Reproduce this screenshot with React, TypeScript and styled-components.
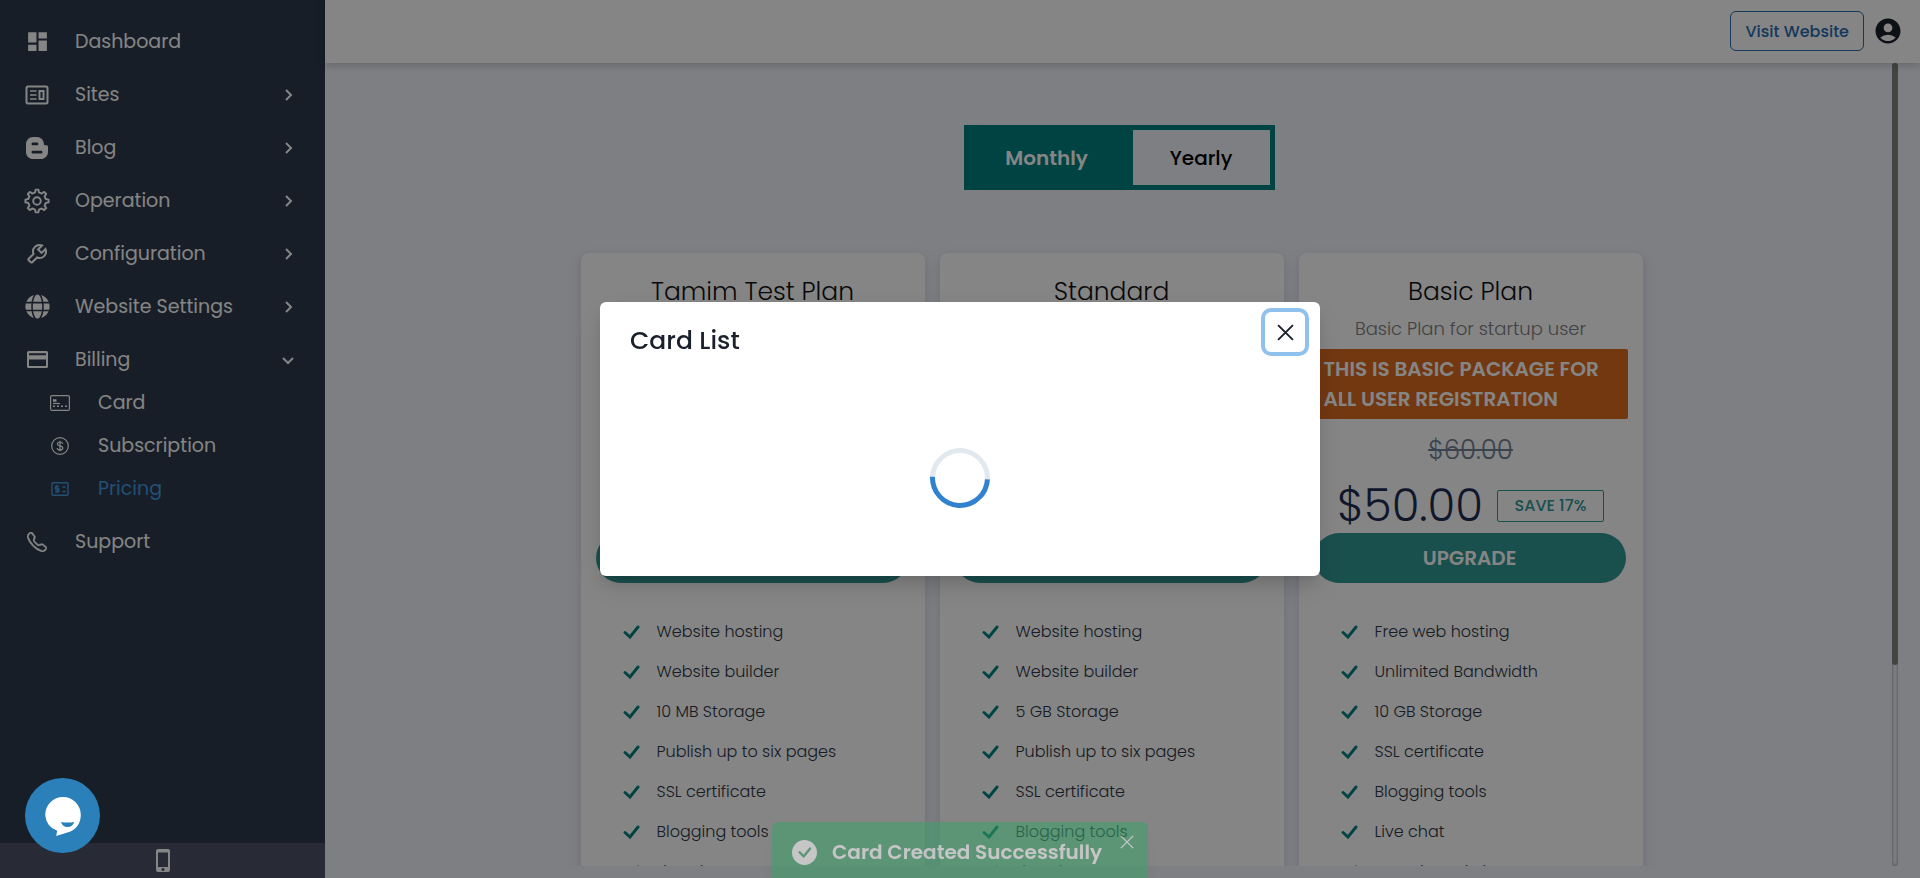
import React from "react";
import styled, { createGlobalStyle, css } from "styled-components";
import { MdDashboard, MdAccountCircle } from "react-icons/md";
import { BsTelephone, BsCheckCircleFill } from "react-icons/bs";
import { BiChevronRight, BiChevronDown, BiWrench } from "react-icons/bi";
import { FaGlobe } from "react-icons/fa";
import { ImBlogger } from "react-icons/im";

const Global = createGlobalStyle`
  *, *::before, *::after { box-sizing: border-box; }
  body {
    margin: 0;
    font-family: Poppins, Inter, sans-serif;
    color: #2d3748;
    background: #f1f3fa;
    overflow: hidden;
  }
  button { font: inherit; cursor: pointer; }
  h1, h2, h3, p, ul { margin: 0; padding: 0; font-weight: 400; }
  ul { list-style: none; }
  a { color: inherit; text-decoration: none; }
`;

const Shell = styled.div`
  display: flex;
  height: 100vh;
`;

const Sidebar = styled.aside`
  flex: 0 0 325px;
  display: flex;
  flex-direction: column;
  background: #2d3a4b;
  color: #fff;
`;

const Nav = styled.nav`
  flex: 1;
  padding-top: 10px;
`;

const NavLink = styled.a<{ $sub?: boolean; $active?: boolean }>`
  display: grid;
  align-items: center;
  grid-template-columns: 26px 1fr 24px;
  column-gap: 25px;
  height: 43px;
  margin-top: 10px;
  padding: 0 25px 0 24px;
  font-size: 19px;
  svg:first-child { justify-self: center; }
  ${(p) =>
    p.$sub &&
    css`
      margin-top: 0;
      padding-left: 47px;
    `}
  ${(p) => p.$active && css`color: #4299e1;`}
`;

const SideFoot = styled.button`
  display: flex;
  align-items: center;
  justify-content: center;
  height: 35px;
  padding: 0;
  border: 0;
  background: #4d5268;
  color: #fff;
`;

const Page = styled.div`
  flex: 1;
  min-width: 0;
  display: flex;
  flex-direction: column;
`;

const TopBar = styled.header`
  position: relative;
  display: flex;
  align-items: center;
  justify-content: flex-end;
  gap: 9px;
  height: 63px;
  padding: 0 17px 1px 0;
  background: #fff;
  color: #1a202c;
  box-shadow: 0 2px 8px rgba(0, 0, 0, 0.2);
`;

const VisitLink = styled.a`
  display: flex;
  align-items: center;
  height: 40px;
  padding: 0 14px;
  border: 1px solid #2b6cb0;
  border-radius: 6px;
  color: #2b6cb0;
  font-size: 16px;
  font-weight: 500;
`;

const IconButton = styled.button`
  display: flex;
  padding: 0;
  border: 0;
  background: none;
  color: inherit;
`;

const Body = styled.div`
  flex: 1;
  min-height: 0;
  display: flex;
  padding: 0 22px 12px 0;
`;

const Scroller = styled.main`
  flex: 1;
  overflow: hidden;
  padding: 62px 0 0 6px;
`;

const Track = styled.div`
  width: 6px;
  border-radius: 3px;
  box-shadow: inset 0 0 3px rgba(0, 0, 0, 0.5);
`;

const Thumb = styled.div`
  height: 75%;
  border-radius: 3px;
  background: #828282;
`;

const ToggleRow = styled.div`
  display: flex;
  justify-content: center;
  padding: 0 0 63px 15px;
`;

const Toggle = styled.div`
  display: flex;
  width: 311px;
  height: 65px;
  border: 5px solid #008080;
`;

const ToggleButton = styled.button<{ $on?: boolean }>`
  flex: ${(p) => (p.$on ? "0 0 164px" : "1")};
  padding: ${(p) => (p.$on ? "0 8px 0 0" : "0")};
  border: 0;
  background: ${(p) => (p.$on ? "#008080" : "transparent")};
  color: ${(p) => (p.$on ? "#fff" : "#000")};
  font-size: 20px;
  font-weight: ${(p) => (p.$on ? 600 : 500)};
`;

const Plans = styled.div`
  display: flex;
  justify-content: center;
  gap: 15px;
`;

const Card = styled.section`
  width: 344px;
  padding: 0 15px 30px;
  border-radius: 8px;
  background: #fff;
  box-shadow: 0 4px 12px rgba(0, 40, 100, 0.15);
`;

const CardHead = styled.div`
  display: flex;
  flex-direction: column;
  align-items: center;
  height: 330px;
  padding-top: 21px;
`;

const PlanName = styled.h2`
  color: #111;
  font-size: 25px;
  font-weight: 300;
  line-height: 36px;
`;

const PlanNote = styled.p`
  margin-top: 6px;
  color: #808080;
  font-size: 18px;
  font-weight: 300;
  line-height: 26px;
`;

const Banner = styled.p`
  align-self: stretch;
  margin-top: 7px;
  padding: 5px 10px;
  border-radius: 2px;
  background: #dd6b20;
  color: #fff;
  font-size: 20px;
  font-weight: 600;
  line-height: 30px;
`;

const OldPrice = styled.del`
  margin-top: 13px;
  color: #718096;
  font-size: 26px;
  font-weight: 300;
  line-height: 36px;
`;

const PriceRow = styled.div`
  display: flex;
  align-items: center;
  gap: 14px;
  margin-top: 11px;
`;

const Price = styled.span`
  color: #1d2c51;
  font-size: 45px;
  font-weight: 300;
  line-height: 54px;
`;

const Save = styled.span`
  width: 107px;
  border: 1px solid #319795;
  border-radius: 2px;
  color: #319795;
  font-size: 16px;
  font-weight: 500;
  line-height: 30px;
  text-align: center;
`;

const Upgrade = styled.button`
  align-self: stretch;
  margin: auto 2px 0 0;
  padding: 0;
  border: 0;
  border-radius: 25px;
  background: #319795;
  color: #fff;
  font-size: 20px;
  font-weight: 600;
  line-height: 50px;
`;

const Features = styled.ul`
  padding: 29px 0 0 27px;
  font-size: 16px;
  font-weight: 300;
  line-height: 40px;
`;

const Feature = styled.li`
  display: flex;
  align-items: center;
  gap: 17px;
  svg { color: #008080; }
`;

const Overlay = styled.div`
  position: fixed;
  inset: 0;
  display: flex;
  justify-content: center;
  align-items: center;
  background: rgba(0, 0, 0, 0.48);
`;

const Dialog = styled.div`
  position: relative;
  width: 720px;
  height: 274px;
  padding: 21px 30px;
  border-radius: 6px;
  background: #fff;
  box-shadow: 0 10px 15px -3px rgba(0, 0, 0, 0.1), 0 4px 6px -2px rgba(0, 0, 0, 0.05), 0 12px 30px rgba(0, 0, 0, 0.1);
`;

const DialogTitle = styled.h1`
  color: #1a202c;
  font-size: 25px;
  font-weight: 500;
  line-height: 36px;
`;

const CloseButton = styled.button`
  position: absolute;
  top: 10px;
  right: 15px;
  display: grid;
  place-items: center;
  width: 40px;
  height: 40px;
  padding: 0;
  border: 0;
  border-radius: 6px;
  background: #fff;
  box-shadow: 0 0 0 4px rgba(66, 153, 225, 0.6);
  color: #1a202c;
`;

const SpinnerWrap = styled.div`
  display: flex;
  justify-content: center;
  padding-top: 89px;
`;

const Spinner = styled.div`
  width: 60px;
  height: 60px;
  border: 5px solid #e2e8f0;
  border-right-color: #3182ce;
  border-bottom-color: #3182ce;
  border-radius: 50%;
  transform: rotate(48deg);
`;

const Toast = styled.div`
  position: fixed;
  top: calc(100% - 56px);
  left: 50%;
  display: flex;
  align-items: center;
  width: 376px;
  height: 60px;
  margin-left: -188px;
  padding: 0 14px 0 20px;
  gap: 15px;
  border-radius: 6px;
  background: #38a169;
  color: #fff;
  font-size: 20px;
  font-weight: 600;
  opacity: 0.53;
  white-space: nowrap;
  box-shadow: 0 10px 15px -3px rgba(0, 0, 0, 0.1);
`;

const ToastClose = styled(IconButton)`
  position: absolute;
  top: 13px;
  right: 14px;
`;

const Chat = styled.button`
  position: fixed;
  left: 25px;
  bottom: 25px;
  width: 75px;
  height: 75px;
  padding: 0;
  border: 0;
  border-radius: 50%;
  background: #2b80b9;
`;

const SitesIcon = () => (
  <svg width="24" height="24" viewBox="0 0 24 24" fill="none" stroke="currentColor" strokeWidth="2">
    <rect x="1.5" y="3.5" width="21" height="17" rx="1.5" />
    <path d="M5 8h6.500M5 12h6.500M5 16h6.500" strokeWidth="1.700" />
    <rect x="14.500" y="8" width="4" height="8" />
  </svg>
);

const GearIcon = () => (
  <svg width="26" height="26" viewBox="0 0 24 24" fill="none" stroke="currentColor" strokeWidth="1.800" strokeLinejoin="round">
    <circle cx="12" cy="12" r="3.500" />
    <path d="M10.200 4l.5-2.500h2.600l.5 2.500 2.600 1.100 2.200-1.500 1.900 1.900-1.500 2.200 1.100 2.500 2.600.5v2.600l-2.600.5-1.100 2.500 1.500 2.200-1.900 1.900-2.200-1.500-2.600 1.100-.5 2.500h-2.600l-.5-2.500-2.600-1.100-2.200 1.500-1.900-1.900 1.500-2.200L3.900 13.800l-2.600-.5v-2.600l2.600-.5L5 7.700 3.500 5.500l1.900-1.900 2.200 1.500z" />
  </svg>
);

const CardIcon = () => (
  <svg width="21" height="17" viewBox="0 0 21 17" fill="currentColor">
    <path fillRule="evenodd" d="M1.500 0h18A1.500 1.500 0 0 1 21 1.500v14a1.500 1.500 0 0 1-1.500 1.500h-18A1.500 1.500 0 0 1 0 15.500v-14A1.500 1.500 0 0 1 1.500 0zM2 2.200v2h17v-2zM2 8.500V15h17V8.500z" />
  </svg>
);

const SubCardIcon = () => (
  <svg width="20" height="16" viewBox="0 0 20 16" fill="none" stroke="currentColor">
    <rect x=".6" y=".6" width="18.800" height="14.800" rx="1.500" strokeWidth="1.200" />
    <path d="M3 5.500h3.500" strokeWidth="2.500" />
    <path d="M3 8.500h7" strokeWidth="1.200" />
    <path d="M3 11.200h14" strokeWidth="1.400" strokeDasharray="2 2" />
  </svg>
);

const DollarIcon = () => (
  <svg width="18" height="18" viewBox="0 0 18 18" fill="none" stroke="currentColor" strokeWidth="1.200">
    <circle cx="9" cy="9" r="8.300" />
    <path d="M11.700 6.800C11.500 5.600 10.500 5 9 5S6.400 5.700 6.400 6.900C6.400 9.500 11.800 8.200 11.800 11c0 1.200-1.200 2-2.800 2s-2.700-.8-2.800-2M9 3.700v10.600" />
  </svg>
);

const PricingIcon = () => (
  <svg width="18" height="14" viewBox="0 0 18 14" fill="none" stroke="currentColor" strokeWidth="1.400">
    <rect x="1" y=".7" width="16" height="12.600" rx="1" />
    <path d="M8 4.500H4.500V7H7.800v2.500H4M6.100 3v8" />
    <path d="M11.500 5h3M11.500 9.500h3" />
  </svg>
);

const PhoneDevice = () => (
  <svg width="14" height="23" viewBox="0 0 14 23" fill="currentColor">
    <path fillRule="evenodd" d="M2 0h10a2 2 0 0 1 2 2v19a2 2 0 0 1-2 2H2a2 2 0 0 1-2-2V2a2 2 0 0 1 2-2zM2 3.500v14.500h10V3.500zM7 19a1.500 1.500 0 1 0 0 3 1.500 1.500 0 0 0 0-3z" />
  </svg>
);

const Cross = ({ size, weight }: { size: number; weight: number }) => (
  <svg width={size} height={size} viewBox="0 0 16 16" stroke="currentColor" strokeWidth={weight}>
    <path d="M1 1l14 14M15 1L1 15" />
  </svg>
);

const Tick = () => (
  <svg width="17" height="14" viewBox="0 0 17 14" fill="none" stroke="currentColor" strokeWidth="2.900" strokeLinecap="round">
    <path d="M2 7.500l5 4.500L15 2" />
  </svg>
);

const ChatGlyph = () => (
  <svg width="75" height="75" viewBox="0 0 75 75">
    <path fill="#fff" d="M38 19a17.800 17.800 0 0 1 17.800 17.800c0 9-5 14.500-11 17L31.200 58l1-5.200A17.500 17.500 0 0 1 20.200 36.800 17.800 17.800 0 0 1 38 19z" />
    <path fill="#2b80b9" d="M36 44q6.500 1 13.200 0-1.500 5-6.600 5T36 44z" />
  </svg>
);

type Item = { label: string; icon: React.ReactNode; more?: "right" | "down"; sub?: boolean; active?: boolean };

const items: Item[] = [
  { label: "Dashboard", icon: <MdDashboard size={25} /> },
  { label: "Sites", icon: <SitesIcon />, more: "right" },
  { label: "Blog", icon: <ImBlogger size={22} />, more: "right" },
  { label: "Operation", icon: <GearIcon />, more: "right" },
  { label: "Configuration", icon: <BiWrench size={24} />, more: "right" },
  { label: "Website Settings", icon: <FaGlobe size={25} />, more: "right" },
  { label: "Billing", icon: <CardIcon />, more: "down" },
  { label: "Card", icon: <SubCardIcon />, sub: true },
  { label: "Subscription", icon: <DollarIcon />, sub: true },
  { label: "Pricing", icon: <PricingIcon />, sub: true, active: true },
  { label: "Support", icon: <BsTelephone size={20} strokeWidth={0.5} /> },
];

type Plan = { name: string; note?: string; banner?: string; old?: string; price?: string; save?: string; features: string[] };

const plans: Plan[] = [
  {
    name: "Tamim Test Plan",
    features: ["Website hosting", "Website builder", "10 MB Storage", "Publish up to six pages", "SSL certificate", "Blogging tools", "Live chat"],
  },
  {
    name: "Standard",
    features: ["Website hosting", "Website builder", "5 GB Storage", "Publish up to six pages", "SSL certificate", "Blogging tools", "Live chat"],
  },
  {
    name: "Basic Plan",
    note: "Basic Plan for startup user",
    banner: "THIS IS BASIC PACKAGE FOR ALL USER REGISTRATION",
    old: "$60.00",
    price: "$50.00",
    save: "SAVE 17%",
    features: ["Free web hosting", "Unlimited Bandwidth", "10 GB Storage", "SSL certificate", "Blogging tools", "Live chat", "Search statistics"],
  },
];

export default function App() {
  return (
    <>
      <Global />
      <Shell>
        <Sidebar>
          <Nav>
            {items.map((it) => (
              <NavLink key={it.label} href="#" $sub={it.sub} $active={it.active}>
                {it.icon}
                <span>{it.label}</span>
                {it.more === "right" && <BiChevronRight size={24} />}
                {it.more === "down" && <BiChevronDown size={24} />}
              </NavLink>
            ))}
          </Nav>
          <SideFoot aria-label="Mobile view">
            <PhoneDevice />
          </SideFoot>
        </Sidebar>
        <Page>
          <TopBar>
            <VisitLink href="#">Visit Website</VisitLink>
            <IconButton aria-label="Account">
              <MdAccountCircle size={30} />
            </IconButton>
          </TopBar>
          <Body>
            <Scroller>
              <ToggleRow>
                <Toggle>
                  <ToggleButton $on>Monthly</ToggleButton>
                  <ToggleButton>Yearly</ToggleButton>
                </Toggle>
              </ToggleRow>
              <Plans>
                {plans.map((p) => (
                  <Card key={p.name}>
                    <CardHead>
                      <PlanName>{p.name}</PlanName>
                      {p.note && <PlanNote>{p.note}</PlanNote>}
                      {p.banner && <Banner>{p.banner}</Banner>}
                      {p.old && <OldPrice>{p.old}</OldPrice>}
                      {p.price && (
                        <PriceRow>
                          <Price>{p.price}</Price>
                          <Save>{p.save}</Save>
                        </PriceRow>
                      )}
                      <Upgrade>UPGRADE</Upgrade>
                    </CardHead>
                    <Features>
                      {p.features.map((f) => (
                        <Feature key={f}>
                          <Tick />
                          {f}
                        </Feature>
                      ))}
                    </Features>
                  </Card>
                ))}
              </Plans>
            </Scroller>
            <Track>
              <Thumb />
            </Track>
          </Body>
        </Page>
      </Shell>
      <Overlay>
        <Dialog role="dialog" aria-modal="true" aria-labelledby="card-list-title">
          <DialogTitle id="card-list-title">Card List</DialogTitle>
          <CloseButton aria-label="Close">
            <Cross size={17} weight={1.8} />
          </CloseButton>
          <SpinnerWrap>
            <Spinner role="status" aria-label="Loading" />
          </SpinnerWrap>
        </Dialog>
      </Overlay>
      <Toast role="alert">
        <BsCheckCircleFill size={25} />
        <span>Card Created Successfully</span>
        <ToastClose aria-label="Dismiss">
          <Cross size={14} weight={1.6} />
        </ToastClose>
      </Toast>
      <Chat aria-label="Open chat">
        <ChatGlyph />
      </Chat>
    </>
  );
}
